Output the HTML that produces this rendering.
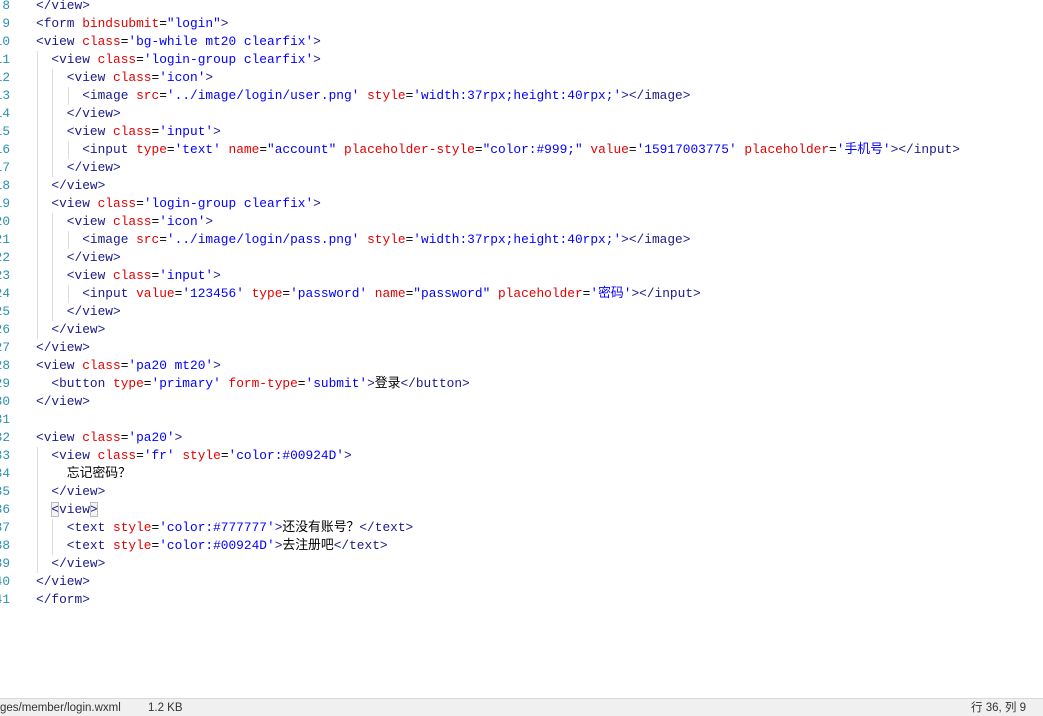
<!DOCTYPE html>
<html><head><meta charset="utf-8"><style>
html,body{margin:0;padding:0;background:#fff;width:1043px;height:716px;overflow:hidden;position:relative}
.ln{position:absolute;left:-20px;width:30px;text-align:right;color:#2b91af;font:12.8px "Liberation Mono",monospace;line-height:18px}
.code{position:absolute;left:36px;white-space:normal;font-family:"Liberation Mono","Noto Sans CJK SC",monospace;font-size:12.83px;line-height:18px;color:#000}
.code div{height:18px;overflow:visible;white-space:pre}
.t{color:#1a1a8c}.a{color:#e50000}.v{color:#0000ff}
.g{position:absolute;width:1px;background:#dcdcdc}
.sb{position:absolute;left:0;top:698px;width:1043px;height:18px;background:#f0f0f0;border-top:1px solid #d8d8d8;font:11.5px "Liberation Sans","Noto Sans CJK SC",sans-serif;color:#333;line-height:18px}
</style></head><body>
<div class="g" style="left:37px;top:51px;height:288px"></div>
<div class="g" style="left:52px;top:69px;height:108px"></div>
<div class="g" style="left:52px;top:213px;height:108px"></div>
<div class="g" style="left:68px;top:87px;height:18px"></div>
<div class="g" style="left:68px;top:141px;height:18px"></div>
<div class="g" style="left:68px;top:231px;height:18px"></div>
<div class="g" style="left:68px;top:285px;height:18px"></div>
<div class="g" style="left:37px;top:447px;height:126px"></div>
<div class="g" style="left:52px;top:519px;height:36px"></div>
<div class="ln" style="top:-3px">8<br>9<br>10<br>11<br>12<br>13<br>14<br>15<br>16<br>17<br>18<br>19<br>20<br>21<br>22<br>23<br>24<br>25<br>26<br>27<br>28<br>29<br>30<br>31<br>32<br>33<br>34<br>35<br>36<br>37<br>38<br>39<br>40<br>41</div>
<div class="code" style="top:-3px">
<div><span class="t">&lt;/view&gt;</span></div>
<div><span class="t">&lt;form</span> <span class="a">bindsubmit</span>=<span class="v">"login"</span><span class="t">&gt;</span></div>
<div><span class="t">&lt;view</span> <span class="a">class</span>=<span class="v">'bg-while mt20 clearfix'</span><span class="t">&gt;</span></div>
<div>  <span class="t">&lt;view</span> <span class="a">class</span>=<span class="v">'login-group clearfix'</span><span class="t">&gt;</span></div>
<div>    <span class="t">&lt;view</span> <span class="a">class</span>=<span class="v">'icon'</span><span class="t">&gt;</span></div>
<div>      <span class="t">&lt;image</span> <span class="a">src</span>=<span class="v">'../image/login/user.png'</span> <span class="a">style</span>=<span class="v">'width:37rpx;height:40rpx;'</span><span class="t">&gt;&lt;/image&gt;</span></div>
<div>    <span class="t">&lt;/view&gt;</span></div>
<div>    <span class="t">&lt;view</span> <span class="a">class</span>=<span class="v">'input'</span><span class="t">&gt;</span></div>
<div>      <span class="t">&lt;input</span> <span class="a">type</span>=<span class="v">'text'</span> <span class="a">name</span>=<span class="v">"account"</span> <span class="a">placeholder-style</span>=<span class="v">"color:#999;"</span> <span class="a">value</span>=<span class="v">'15917003775'</span> <span class="a">placeholder</span>=<span class="v">'手机号'</span><span class="t">&gt;&lt;/input&gt;</span></div>
<div>    <span class="t">&lt;/view&gt;</span></div>
<div>  <span class="t">&lt;/view&gt;</span></div>
<div>  <span class="t">&lt;view</span> <span class="a">class</span>=<span class="v">'login-group clearfix'</span><span class="t">&gt;</span></div>
<div>    <span class="t">&lt;view</span> <span class="a">class</span>=<span class="v">'icon'</span><span class="t">&gt;</span></div>
<div>      <span class="t">&lt;image</span> <span class="a">src</span>=<span class="v">'../image/login/pass.png'</span> <span class="a">style</span>=<span class="v">'width:37rpx;height:40rpx;'</span><span class="t">&gt;&lt;/image&gt;</span></div>
<div>    <span class="t">&lt;/view&gt;</span></div>
<div>    <span class="t">&lt;view</span> <span class="a">class</span>=<span class="v">'input'</span><span class="t">&gt;</span></div>
<div>      <span class="t">&lt;input</span> <span class="a">value</span>=<span class="v">'123456'</span> <span class="a">type</span>=<span class="v">'password'</span> <span class="a">name</span>=<span class="v">"password"</span> <span class="a">placeholder</span>=<span class="v">'密码'</span><span class="t">&gt;&lt;/input&gt;</span></div>
<div>    <span class="t">&lt;/view&gt;</span></div>
<div>  <span class="t">&lt;/view&gt;</span></div>
<div><span class="t">&lt;/view&gt;</span></div>
<div><span class="t">&lt;view</span> <span class="a">class</span>=<span class="v">'pa20 mt20'</span><span class="t">&gt;</span></div>
<div>  <span class="t">&lt;button</span> <span class="a">type</span>=<span class="v">'primary'</span> <span class="a">form-type</span>=<span class="v">'submit'</span><span class="t">&gt;</span>登录<span class="t">&lt;/button&gt;</span></div>
<div><span class="t">&lt;/view&gt;</span></div>
<div> </div>
<div><span class="t">&lt;view</span> <span class="a">class</span>=<span class="v">'pa20'</span><span class="t">&gt;</span></div>
<div>  <span class="t">&lt;view</span> <span class="a">class</span>=<span class="v">'fr'</span> <span class="a">style</span>=<span class="v">'color:#00924D'</span><span class="t">&gt;</span></div>
<div>    忘记密码？</div>
<div>  <span class="t">&lt;/view&gt;</span></div>
<div>  <span class="t" style="outline:1px solid #bbb;outline-offset:-1px;background:#f4f4f4">&lt;</span><span class="t">view</span><span class="t" style="outline:1px solid #bbb;outline-offset:-1px;background:#f4f4f4">&gt;</span></div>
<div>    <span class="t">&lt;text</span> <span class="a">style</span>=<span class="v">'color:#777777'</span><span class="t">&gt;</span>还没有账号？<span class="t">&lt;/text&gt;</span></div>
<div>    <span class="t">&lt;text</span> <span class="a">style</span>=<span class="v">'color:#00924D'</span><span class="t">&gt;</span>去注册吧<span class="t">&lt;/text&gt;</span></div>
<div>  <span class="t">&lt;/view&gt;</span></div>
<div><span class="t">&lt;/view&gt;</span></div>
<div><span class="t">&lt;/form&gt;</span></div>
</div>
<div class="sb"><span style="position:absolute;left:0">ges/member/login.wxml</span><span style="position:absolute;left:148px">1.2 KB</span><span style="position:absolute;left:971px">行 36, 列 9</span></div>
</body></html>
